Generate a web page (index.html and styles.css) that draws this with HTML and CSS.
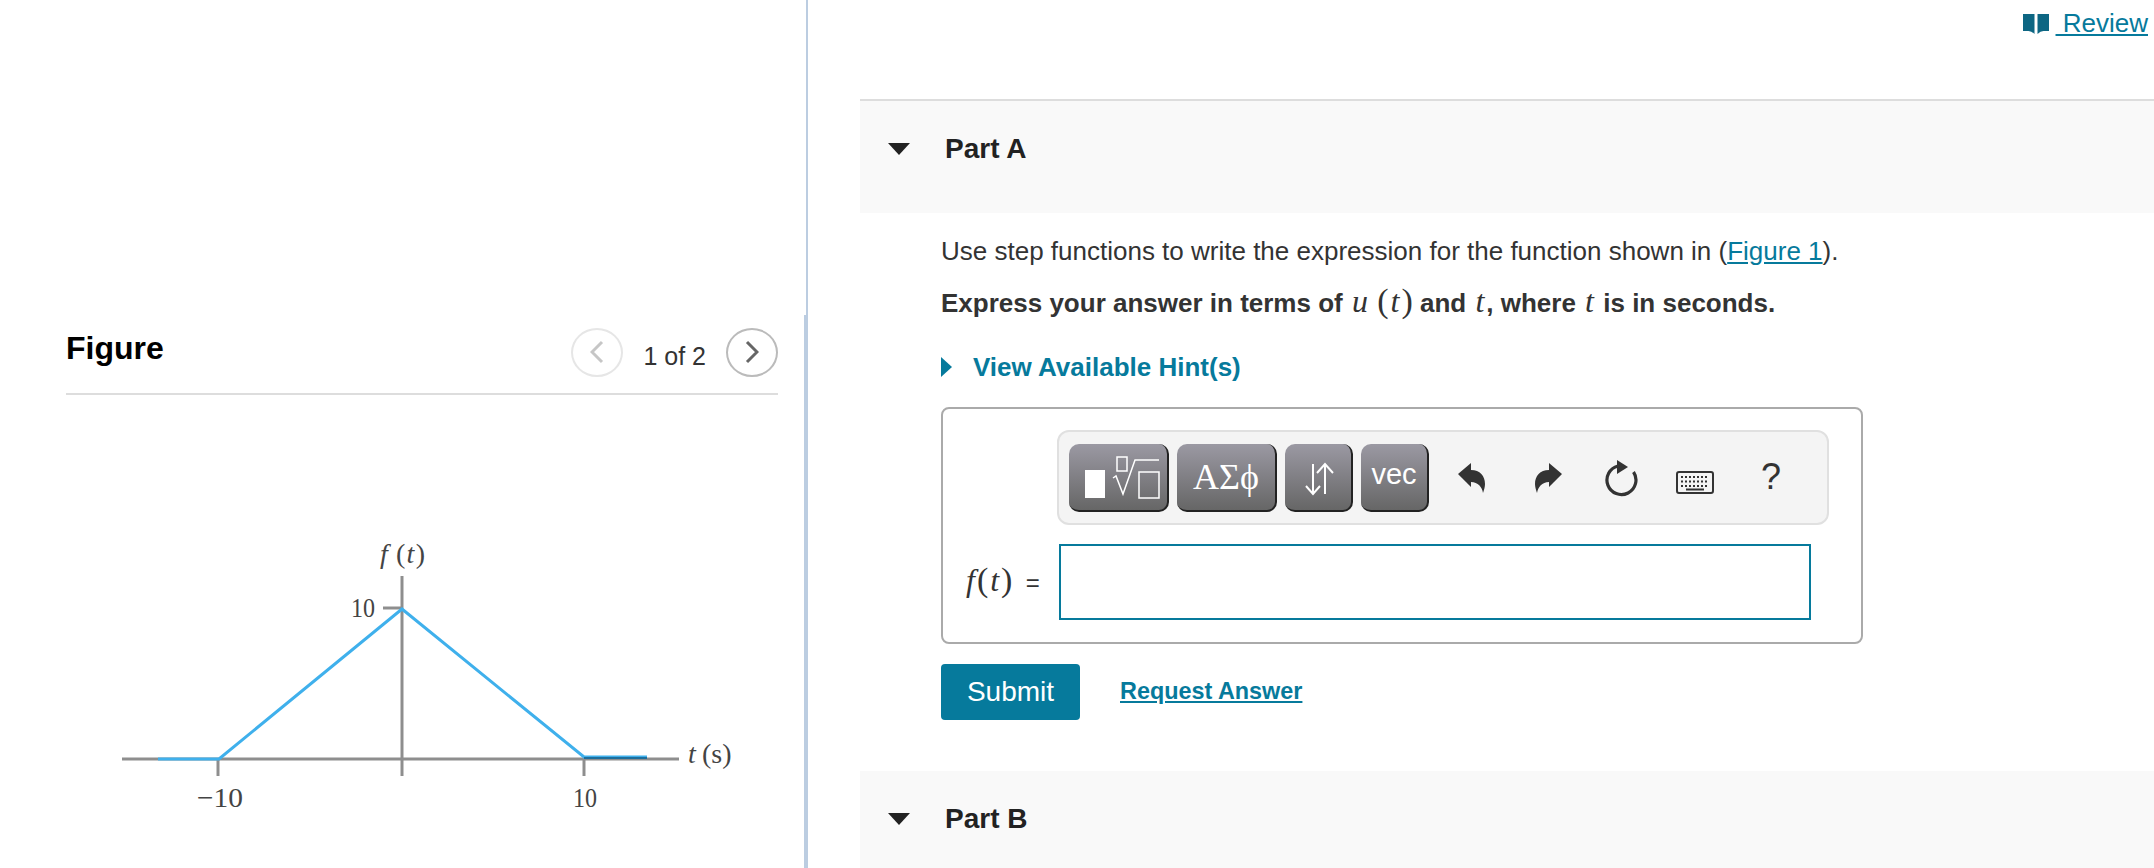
FILE: index.html
```html
<!DOCTYPE html>
<html lang="en">
<head>
<meta charset="utf-8">
<title>Part A</title>
<link rel="stylesheet" href="styles.css">
</head>
<body>
<div class="page">
  <aside class="left">
    <div class="figure">
      <div class="figure-head">
        <h2 class="figure-title">Figure</h2>
        <div class="pager">
          <span class="round off"><svg width="14" height="24" viewBox="0 0 14 24"><path d="M12 2 2 12l10 10" class="chev"/></svg></span>
          <span class="count">1 of 2</span>
          <span class="round on"><svg width="14" height="24" viewBox="0 0 14 24"><path d="M2 2l10 10L2 22" class="chev"/></svg></span>
        </div>
      </div>
      <svg class="graph" width="712" height="320" viewBox="66 530 712 320">
        <g class="axis">
          <path d="M122 759H679"/>
          <path d="M402 576V776"/>
          <path d="M218 759V776"/>
          <path d="M584 759V776"/>
          <path d="M383 608H402"/>
        </g>
        <path class="curve" d="M158 759H219L402 609L584 757H647"/>
        <path class="curve-dark" d="M584 758H647"/>
        <text class="gt it" x="380" y="563">f</text>
        <text class="gt" x="396" y="563" textLength="29" lengthAdjust="spacing">(<tspan class="it">t</tspan>)</text>
        <text class="gt" x="351" y="617" textLength="24" lengthAdjust="spacingAndGlyphs">10</text>
        <text class="gt" x="197" y="807" textLength="46" lengthAdjust="spacingAndGlyphs">−10</text>
        <text class="gt" x="573" y="807" textLength="24" lengthAdjust="spacingAndGlyphs">10</text>
        <text class="gt it" x="688" y="763">t</text>
        <text class="gt" x="702" y="763">(s)</text>
      </svg>
    </div>
  </aside>
  <main class="right">
    <div class="top">
      <a class="review" href="#"><svg class="book" width="26" height="20" viewBox="0 0 26 20"><path d="M0 0h11.500v20q-3-3-6-3H0zM26 0H14.500v20q3-3 6-3H26z"/></svg><span class="review-link">&nbsp;Review</span></a>
    </div>
    <section class="part-head first">
      <span class="tri"></span><h3 class="part-title">Part A</h3>
    </section>
    <section class="part-body">
      <p class="q">Use step functions to write the expression for the function shown in (<a class="link" href="#">Figure 1</a>).</p>
      <p class="q b">Express your answer in terms of <span class="m">u</span> <span class="mr">(<span class="m">t</span>)</span> and <span class="m">t</span>, where <span class="m">t</span> is in seconds.</p>
      <div class="hint"><span class="tri-r"></span><span>View Available Hint(s)</span></div>
      <div class="answer">
        <div class="toolbar">
          <div class="keys">
            <button class="key k1">
              <svg width="98" height="66" viewBox="0 0 98 66"><rect x="16" y="26" width="20" height="28" fill="#fff"/><g fill="none" stroke="#fff" stroke-width="1.500"><rect x="48" y="13" width="10" height="14"/><rect x="70" y="28" width="20" height="26"/><path d="M44 34l3-2 7 18 12-34h24"/></g></svg>
            </button>
            <button class="key k2">ΑΣϕ</button>
            <button class="key k3"><svg width="66" height="66" viewBox="0 0 66 66"><g fill="none" stroke="#fff" stroke-width="2"><path d="M28 20V50M21 42l7 8 7-8M40 50V20M32 29l8-9 8 9"/></g></svg></button>
            <button class="key k4">vec</button>
          </div>
          <div class="tools">
            <svg class="tool t-undo" width="27" height="30" viewBox="0 0 27 30"><path d="M0 11 13 0v7c9 0 14 6 14 14 0 3-1 6-2 9-1-6-5-11-12-11v5z"/></svg>
            <svg class="tool t-redo" width="27" height="30" viewBox="0 0 27 30"><path d="M27 11 14 0v7C5 7 0 13 0 21c0 3 1 6 2 9 1-6 5-11 12-11v5z"/></svg>
            <svg class="tool t-reload" width="34" height="38" viewBox="0 0 34 38"><path class="ring" d="M14 7A14.500 14.500 0 1 0 29.500 13"/><path d="M13 1l11 7-11 7z"/></svg>
            <svg class="t-keys" width="38" height="23" viewBox="0 0 38 23"><rect x="1" y="1" width="36" height="21" rx="2" fill="#f4f4f4" stroke="#333" stroke-width="2"/><path d="M5 6h28M5 10.500h28M5 15h28" stroke="#333" stroke-width="2" stroke-dasharray="2 2"/><path d="M10 18.500h18" stroke="#333" stroke-width="2"/></svg>
            <span class="help">?</span>
          </div>
        </div>
        <div class="eq">
          <span class="lhs"><span class="m">f</span><span class="mr">(<span class="m">t</span>)</span> <span class="eqs">=</span></span>
          <div class="input"></div>
        </div>
      </div>
      <div class="actions">
        <button class="submit">Submit</button>
        <a class="request" href="#">Request Answer</a>
      </div>
    </section>
    <section class="part-head">
      <span class="tri"></span><h3 class="part-title">Part B</h3>
    </section>
  </main>
</div>
</body>
</html>
```
FILE: styles.css
```css
html, body { margin: 0; padding: 0; background: #fff; }
body { font-family: "Liberation Sans", Arial, sans-serif; color: #333; overflow: hidden; }
.page { display: grid; grid-template-columns: 808px 1fr; grid-template-rows: 868px; height: 868px; overflow: hidden; }

.left { display: flex; flex-direction: column; justify-content: flex-end; border-right: 2px solid #bccde1; box-sizing: border-box; }
.figure { height: 553px; box-sizing: border-box; padding: 0 26px 0 66px; border-right: 2px solid #bccde1; }
.figure-head { display: flex; justify-content: space-between; align-items: center; height: 80px; box-sizing: border-box; border-bottom: 2px solid #ddd; }
.figure-title { margin: 0 0 12px; font-size: 32px; font-weight: 700; color: #000; }
.pager { display: flex; align-items: center; gap: 20px; margin-bottom: 4px; }
.count { font-size: 25px; color: #333; margin-top: 8px; }
.round { width: 52px; height: 49px; box-sizing: border-box; border-radius: 50%; display: flex; align-items: center; justify-content: center; background: #fff; }
.round.off { border: 2px solid #e6e6e6; }
.round.on { border: 2px solid #bbb; }
.chev { fill: none; stroke-width: 3; }
.off .chev { stroke: #c6c6c6; }
.on .chev { stroke: #666; }
.graph { display: block; margin-top: 135px; }
.axis path { fill: none; stroke: #8e8e8e; stroke-width: 3; }
.curve { fill: none; stroke: #3fb0ec; stroke-width: 3; }
.curve-dark { fill: none; stroke: #1c6f9e; stroke-width: 2; }
.gt { font-family: "Liberation Serif", serif; font-size: 28px; fill: #444; }
.it { font-style: italic; }

.right { min-width: 0; padding-left: 52px; display: flex; flex-direction: column; overflow: hidden; }
.top { height: 99px; display: flex; justify-content: flex-end; align-items: flex-start; flex: none; }
.review { display: flex; align-items: center; margin: 8px 6px 0 0; font-size: 26px; color: #067a9c; text-decoration: none; }
.book { fill: #0d6683; margin-right: 7px; }
.review-link { text-decoration: underline; }

.part-head { display: flex; align-items: center; background: #f9f9f9; height: 112px; flex: none; padding: 0 0 16px 28px; box-sizing: border-box; }
.part-head.first { height: 114px; border-top: 2px solid #ddd; }
.tri { width: 0; height: 0; border-left: 11px solid transparent; border-right: 11px solid transparent; border-top: 12px solid #222; margin-right: 35px; }
.part-title { margin: 0; font-size: 28px; font-weight: 700; color: #222; }

.part-body { padding: 0 0 0 81px; height: 558px; flex: none; box-sizing: border-box; }
.q { margin: 0; font-size: 26px; line-height: 32px; color: #333; }
.q:first-child { padding-top: 22px; }
.q.b { font-weight: 700; margin-top: 18px; }
.m { font-family: "Liberation Serif", serif; font-style: italic; font-weight: 400; font-size: 32px; padding: 0 2px; }
.mr { font-family: "Liberation Serif", serif; font-weight: 400; font-size: 34px; }
.mr .m { font-size: 32px; }
.link { color: #067a9c; text-decoration: underline; }
.hint { display: flex; align-items: center; margin-top: 32px; font-size: 26px; font-weight: 700; color: #067a9c; height: 32px; }
.tri-r { width: 0; height: 0; border-top: 10px solid transparent; border-bottom: 10px solid transparent; border-left: 11px solid #067a9c; margin-right: 21px; }

.answer { margin-top: 24px; width: 922px; height: 237px; box-sizing: border-box; border: 2px solid #aaa; border-radius: 8px; padding: 21px 32px 0 0; display: flex; flex-direction: column; align-items: flex-end; }
.toolbar { width: 772px; height: 95px; box-sizing: border-box; border: 2px solid #e0e0e0; border-radius: 12px; background: #f4f4f4; display: flex; align-items: center; padding: 0 10px; }
.keys { display: flex; gap: 8px; }
.key { box-sizing: border-box; height: 68px; border: 0; border-radius: 10px; border-right: 2px solid #222; border-bottom: 2px solid #222; background: linear-gradient(#9b99a3, #666); color: #fff; padding: 0; display: flex; align-items: center; justify-content: center; }
.k1 { width: 100px; }
.k2 { width: 100px; font-family: "Liberation Serif", serif; font-size: 36px; }
.k3 { width: 68px; }
.k4 { width: 68px; font-family: "Liberation Sans", sans-serif; font-size: 29px; padding-bottom: 4px; }
.tools { display: flex; align-items: center; padding-left: 29px; }
.tool { fill: #333; }
.ring { fill: none; stroke: #333; stroke-width: 3.2; }
.t-redo { margin-left: 50px; }
.t-reload { margin-left: 42px; }
.t-keys { margin-left: 38px; margin-top: 9px; }
.help { font-size: 36px; line-height: 1; color: #333; margin-left: 47px; margin-top: -2px; }

.eq { display: flex; align-items: center; align-self: stretch; margin-top: 19px; padding-left: 21px; }
.lhs { width: 95px; flex: none; font-size: 26px; white-space: nowrap; color: #333; margin-top: -4px; }
.eqs { font-family: "Liberation Sans", sans-serif; font-size: 24px; margin-left: 6px; }
.input { flex: 1; height: 76px; margin-right: 18px; box-sizing: border-box; border: 2px solid #067a9c; background: #fff; }

.actions { display: flex; align-items: center; margin-top: 20px; gap: 40px; }
.submit { width: 139px; height: 56px; border: 0; border-radius: 4px; background: #067a9c; color: #fff; font-family: "Liberation Sans", sans-serif; font-size: 28px; padding: 0; }
.request { color: #067a9c; font-size: 23.4px; font-weight: 700; text-decoration: underline; margin-bottom: 2px; }
```
